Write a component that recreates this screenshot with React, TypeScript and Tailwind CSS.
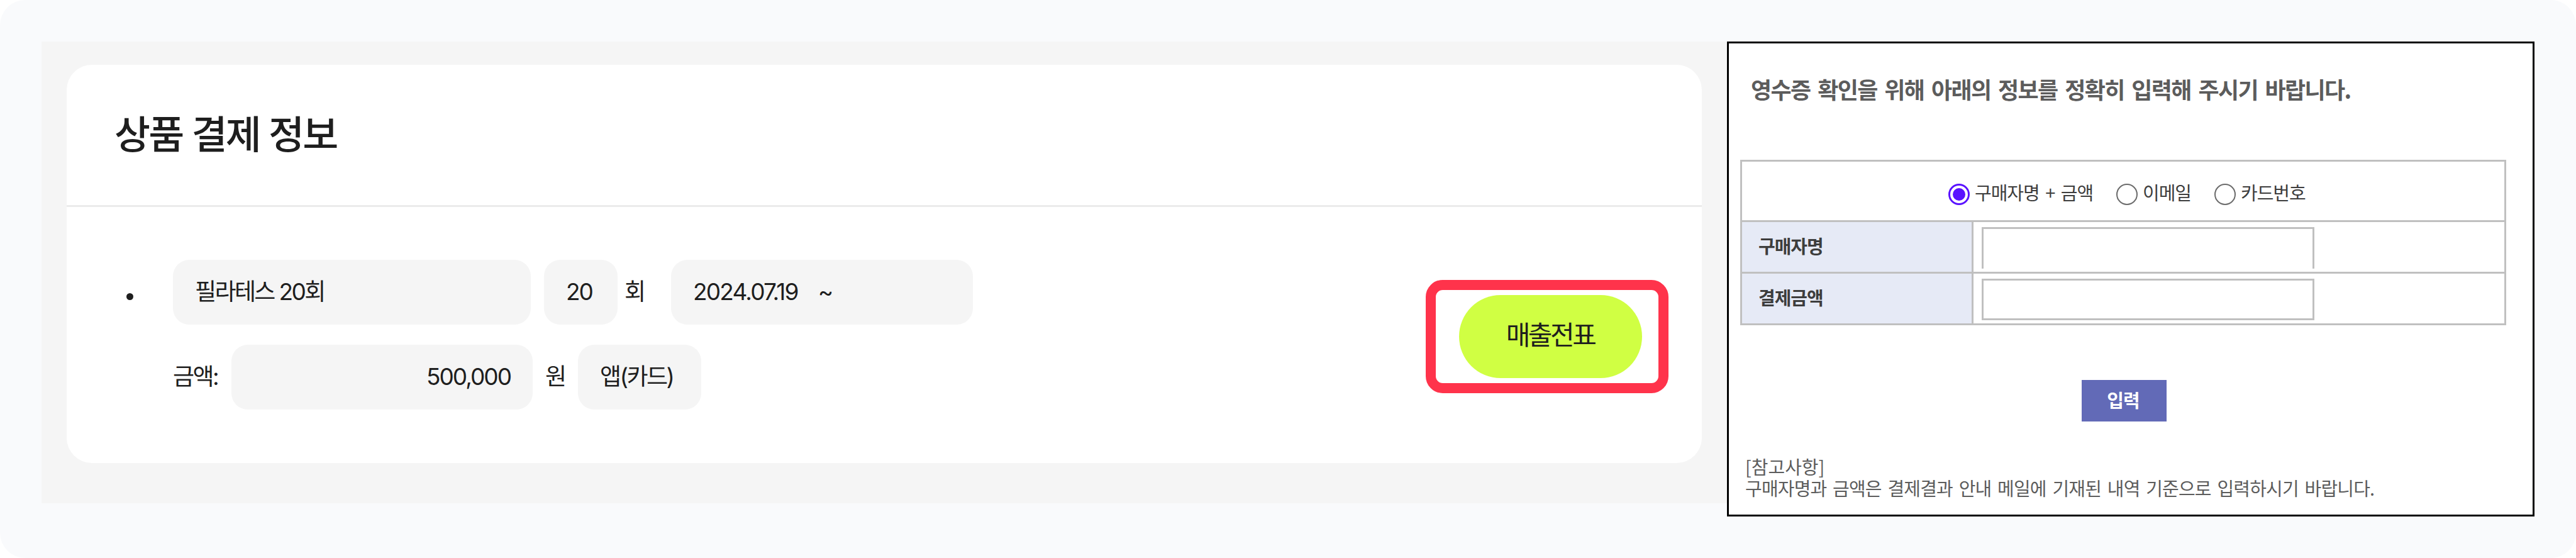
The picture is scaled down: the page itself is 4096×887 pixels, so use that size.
import { ReactNode } from 'react'

function Field({ className, children }: { className: string; children: ReactNode }) {
  return (
    <div className={`flex h-[103px] shrink-0 items-center rounded-[26px] bg-[#f5f5f5] px-[35px] pb-[3px] ${className}`}>
      {children}
    </div>
  )
}

function Radio({ label, checked, className }: { label: string; checked?: boolean; className: string }) {
  return (
    <label className={`flex shrink-0 items-center ${className}`}>
      {checked ? (
        <span className="mr-[8px] flex size-[34px] shrink-0 items-center justify-center rounded-full border-[3px] border-[#5a12ff]">
          <span className="size-[20px] rounded-full bg-[#5a12ff]"></span>
        </span>
      ) : (
        <span className="mr-[8px] size-[34px] shrink-0 rounded-full border-[2.5px] border-[#6b6b6b]"></span>
      )}
      <span className="-mt-[6px] whitespace-nowrap">{label}</span>
    </label>
  )
}

function PaymentCard() {
  return (
    <section className="h-[734px] w-[2680px] shrink-0 bg-[#f5f5f5] pt-[37px] pl-[40px] font-['Inter','Noto_Sans_CJK_KR',sans-serif] text-[#1e1e1e]">
      <div className="h-[633px] w-[2600px] rounded-[40px] bg-white">
        <div className="flex h-[226px] items-center border-b-[3px] border-[#ebebeb] pl-[76px]">
          <h2 className="text-[62px] leading-none font-medium tracking-[-2.7px] whitespace-nowrap">상품 결제 정보</h2>
        </div>
        <div className="flex pt-[84px] pl-[95px] text-[37px] leading-none tracking-[-2px] whitespace-nowrap">
          <span className="mt-[53px] mr-[63px] size-[11px] shrink-0 rounded-full bg-[#1e1e1e]"></span>
          <div className="flex w-[1272px] flex-col gap-[32px]">
            <div className="flex items-center">
              <Field className="w-[569px] tracking-[-2.6px]">필라테스 20회</Field>
              <Field className="ml-[21px] w-[117px]">20</Field>
              <span className="ml-[11px] w-[74px] pb-[3px]">회</span>
              <Field className="w-[480px] gap-[32px] tracking-[-1.8px]">
                <span>2024.07.19</span>
                <span>~</span>
              </Field>
            </div>
            <div className="flex items-center">
              <span className="w-[93px] pb-[3px] tracking-[-2.6px]">금액:</span>
              <Field className="w-[479px] justify-end">500,000</Field>
              <span className="ml-[20px] w-[52px] pb-[3px]">원</span>
              <Field className="w-[196px] tracking-[-2.5px]">앱(카드)</Field>
            </div>
          </div>
          <div className="mt-[32px] ml-[720px] flex h-[180px] w-[386px] items-center justify-center rounded-[27px] border-[16px] border-[#ff334b] pl-[10px]">
            <button className="h-[132px] w-[291px] rounded-full bg-[#d0ff43] pb-[5px] text-[42px] tracking-[-3.5px]">매출전표</button>
          </div>
        </div>
      </div>
    </section>
  )
}

function ReceiptForm() {
  return (
    <section className="flex h-[755px] w-[1284px] shrink-0 flex-col border-[3px] border-black bg-white pl-[18px] font-['Noto_Sans_CJK_KR',sans-serif] text-[#3d3d3d]">
      <h3 className="mt-[52px] pl-[17px] text-[36px] leading-[40px] font-bold tracking-[-1.6px] whitespace-nowrap text-[#5c5c5c] [word-spacing:5px]">
        영수증 확인을 위해 아래의 정보를 정확히 입력해 주시기 바랍니다.
      </h3>
      <div className="mt-[93px] h-[263px] w-[1218px] border-[3px] border-[#c0c0c0] text-[29px] leading-none tracking-[-1px]">
        <div className="flex h-[93px] items-center pt-[10px] pl-[328px] [word-spacing:4px]">
          <Radio label="구매자명 + 금액" checked className="w-[267px]" />
          <Radio label="이메일" className="w-[156px]" />
          <Radio label="카드번호" className="w-[200px]" />
        </div>
        <div className="flex h-[82px] border-t-[3px] border-[#c0c0c0]">
          <div className="flex w-[368px] items-center border-r-[3px] border-[#c0c0c0] bg-[#e6eaf6] pb-[4px] pl-[26px] font-bold">구매자명</div>
          <div className="mt-[8px] ml-[13px] h-[66px] w-[529px] border-[3px] border-b-0 border-[#c0c0c0]"></div>
        </div>
        <div className="flex h-[82px] border-t-[3px] border-[#c0c0c0]">
          <div className="flex w-[368px] items-center border-r-[3px] border-[#c0c0c0] bg-[#e6eaf6] pb-[4px] pl-[26px] font-bold">결제금액</div>
          <div className="mt-[8px] ml-[13px] h-[66px] w-[529px] border-[3px] border-[#c0c0c0]"></div>
        </div>
      </div>
      <button className="mt-[87px] ml-[543px] h-[66px] w-[135px] bg-[#626ab7] pr-[3px] pb-[4px] text-[29px] leading-none font-bold tracking-[-1px] text-white">입력</button>
      <div className="mt-[54px] pl-[8px] text-[29px] leading-[34px] whitespace-nowrap text-[#5c5c5c]">
        <p>[참고사항]</p>
        <p className="tracking-[-0.8px] [word-spacing:4px]">구매자명과 금액은 결제결과 안내 메일에 기재된 내역 기준으로 입력하시기 바랍니다.</p>
      </div>
    </section>
  )
}

function App() {
  return (
    <main className="flex h-[887px] w-[4096px] overflow-hidden rounded-[40px] bg-[#f9fafc] pt-[66px] pl-[66px]">
      <PaymentCard />
      <ReceiptForm />
    </main>
  )
}

export default App
